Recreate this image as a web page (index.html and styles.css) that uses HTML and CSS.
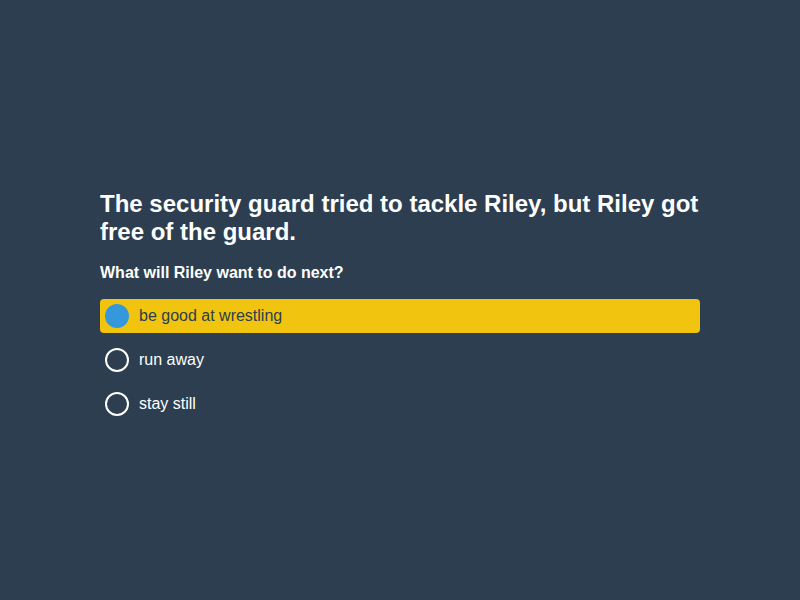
FILE: index.html
```html
<!DOCTYPE html>
<html>
<head>
<meta charset="utf-8">
<link rel="stylesheet" href="styles.css">
</head>
<body>
<main class="page">
  <section class="quiz">
    <h1 class="context">The security guard tried to tackle Riley, but Riley got free of the guard.</h1>
    <h2 class="question">What will Riley want to do next?</h2>
    <ul class="options">
      <li class="option selected"><span class="radio"></span><span class="label">be good at wrestling</span></li>
      <li class="option"><span class="radio"></span><span class="label">run away</span></li>
      <li class="option"><span class="radio"></span><span class="label">stay still</span></li>
    </ul>
  </section>
</main>
</body>
</html>
```
FILE: styles.css
```css
html, body {
  margin: 0;
  padding: 0;
  background: #2c3e50;
}
body {
  font-family: "Liberation Sans", Arial, sans-serif;
  color: #ffffff;
}
.page {
  height: 600px;
  display: flex;
  align-items: center;
  justify-content: center;
}
.quiz {
  width: 600px;
  padding-top: 10px;
}
.context {
  font-size: 24px;
  line-height: 28px;
  font-weight: bold;
  margin: 0 0 18px 0;
}
.question {
  font-size: 16px;
  line-height: 18px;
  font-weight: bold;
  margin: 0 0 17px 0;
}
.options {
  list-style: none;
  margin: 0;
  padding: 0;
  display: flex;
  flex-direction: column;
  gap: 10px;
}
.option {
  display: flex;
  align-items: center;
  gap: 10px;
  height: 34px;
  padding: 0 5px;
  border-radius: 4px;
  font-size: 16px;
}
.radio {
  width: 20px;
  height: 20px;
  border: 2px solid #ffffff;
  border-radius: 50%;
  flex: none;
}
.option.selected {
  background: #f1c40f;
  color: #2c3e50;
}
.option.selected .radio {
  border-color: #3498db;
  background: #3498db;
}
```
